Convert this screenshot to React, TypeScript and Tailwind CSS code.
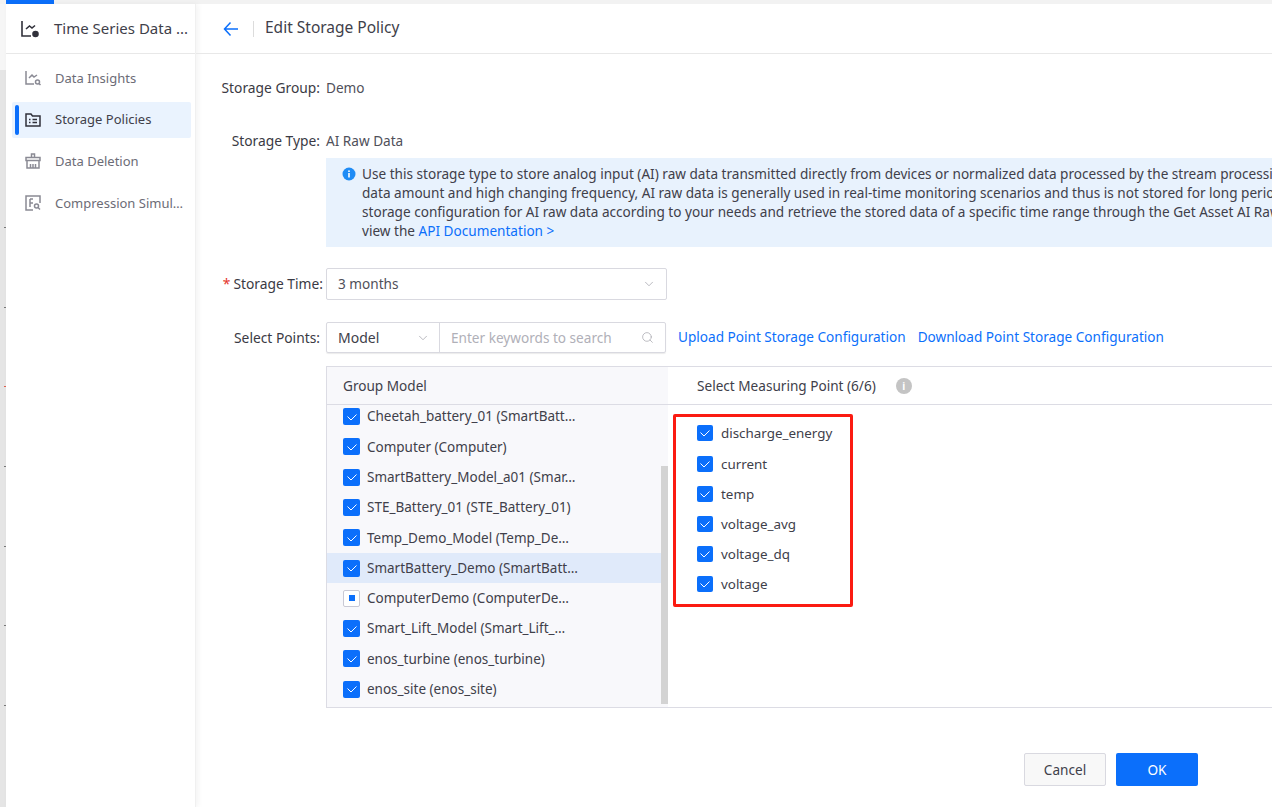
import { ChevronDown, Search } from "lucide-react";

const NAV_ITEMS = [
  { label: "Data Insights", icon: "insights" },
  { label: "Storage Policies", icon: "policies", active: true },
  { label: "Data Deletion", icon: "deletion" },
  { label: "Compression Simul…", icon: "compression" },
];

const MODELS = [
  { label: "Cheetah_battery_01 (SmartBatt…" },
  { label: "Computer (Computer)" },
  { label: "SmartBattery_Model_a01 (Smar…" },
  { label: "STE_Battery_01 (STE_Battery_01)" },
  { label: "Temp_Demo_Model (Temp_De…" },
  { label: "SmartBattery_Demo (SmartBatt…", selected: true },
  { label: "ComputerDemo (ComputerDe…", partial: true },
  { label: "Smart_Lift_Model (Smart_Lift_…" },
  { label: "enos_turbine (enos_turbine)" },
  { label: "enos_site (enos_site)" },
];

const POINTS = ["discharge_energy", "current", "temp", "voltage_avg", "voltage_dq", "voltage"];

const TICKS = ["#777777", "#777777", "#e0604f", "#777777", "#777777", "#777777", "#777777"];

function NavIcon({ name, color }: { name: string; color: string }) {
  return (
    <svg width="18" height="18" viewBox="0 0 18 18" fill="none" stroke={color} strokeWidth="1.5">
      {name === "insights" && (
        <>
          <path d="M2 2v13h8" />
          <path d="M5 9l3-3 2 2 3-2" />
          <circle cx="13.5" cy="13" r="2" />
          <path d="M15 14.5l1.5 1.5" />
        </>
      )}
      {name === "policies" && (
        <>
          <path d="M2 15V3h5l1.5 2H16v10z" />
          <path d="M5 8.5h1.5M8.5 8.5H13M5 11.5h1.5M8.5 11.5H13" />
        </>
      )}
      {name === "deletion" && (
        <>
          <path d="M7.5 5V2h3v3" />
          <path d="M2 5.5h14v3H2z" />
          <path d="M3 8.5V16h12V8.5" />
          <path d="M6.5 12v4M9 12v4M11.5 12v4" />
        </>
      )}
      {name === "compression" && (
        <>
          <path d="M16 9V2H2v14h7" />
          <path d="M6 5h3M6 5v8M6 9h3" />
          <circle cx="12.5" cy="12" r="2" />
          <path d="M14 13.5l2 2" />
        </>
      )}
    </svg>
  );
}

function Checkbox({ partial, large }: { partial?: boolean; large?: boolean }) {
  const size = large ? "h-[17px] w-[17px]" : "h-4 w-4";
  if (partial) {
    return (
      <span className={`flex shrink-0 items-center justify-center rounded-[2px] border border-[#c9c9d4] bg-white ${size}`}>
        <span className="h-1.5 w-1.5 bg-[#0b6ffb]" />
      </span>
    );
  }
  return (
    <span className={`flex shrink-0 items-center justify-center rounded-[2px] bg-[#0b6ffb] ${size}`}>
      <svg width="12" height="12" viewBox="0 0 12 12" fill="none" stroke="#ffffff" strokeWidth="1">
        <path d="M1.5 5.5L5 9l5.5-5.5" />
      </svg>
    </span>
  );
}

function FormLabel({ children, required }: { children: string; required?: boolean }) {
  return (
    <div className={`flex w-[130px] shrink-0 justify-end text-[13.8px] text-[#3a3a44] ${required ? "pr-[3px]" : "pr-[6px]"}`}>
      {required && <span className="mr-[3px] text-[#e5352b]">*</span>}
      <span>{children}:</span>
    </div>
  );
}

export default function App() {
  return (
    <div
      className="flex h-[807px] w-[1272px] flex-col overflow-hidden bg-white text-[13.6px] text-[#40404a]"
      style={{ fontFamily: '"Noto Sans", "Open Sans", sans-serif' }}
    >
      <div className="flex h-1 shrink-0 bg-[#f2f2f2]">
        <div className="ml-[6px] w-12 bg-[#0b6ffb]" />
      </div>

      <div className="flex min-h-0 flex-1">
        {/* strip of the page behind the panel */}
        <div className="flex w-[6px] shrink-0 flex-col bg-[#e5e5e5]">
          <div className="h-[66px] shrink-0 bg-[#f6f6f6]" />
          <div className="mt-[157px] flex flex-col gap-[78.7px]">
            {TICKS.map((color, i) => (
              <div key={i} className="ml-[4px] h-px w-[2px]" style={{ backgroundColor: color }} />
            ))}
          </div>
        </div>

        <aside className="flex w-[190px] shrink-0 flex-col border-r border-[#f0f0f0] bg-white shadow-[2px_0_6px_rgba(0,0,0,0.05)]">
          <div className="flex h-[50px] shrink-0 items-center border-b border-[#e8e8e8] pl-[14px] text-[#40404a]">
            <svg width="20" height="20" viewBox="0 0 20 20" fill="none" stroke="#30303a" strokeWidth="1.6">
              <path d="M2 2v15h9" />
              <path d="M6 10l3.5-3 2.5 2 3-2.5" />
              <circle cx="15.5" cy="15" r="2.5" fill="#30303a" />
            </svg>
            <span className="ml-[14px] text-[15px]">Time Series Data ...</span>
          </div>
          <nav className="flex flex-col gap-[5.6px] pt-[6px] pr-[4px] pl-[6px]">
            {NAV_ITEMS.map((item) => (
              <div
                key={item.label}
                className={`relative flex h-9 items-center rounded-[2px] pl-[12px] text-[13px] ${
                  item.active ? "bg-[#eaf3fe] text-[#40404a]" : "text-[#6c6c76]"
                }`}
              >
                {item.active && (
                  <span className="absolute top-[3px] left-[3px] h-[30px] w-[4px] rounded-[2px] bg-[#0b6ffb]" />
                )}
                <NavIcon name={item.icon} color={item.active ? "#30303a" : "#8a8a94"} />
                <span className="mt-[1px] ml-[13px] whitespace-nowrap">{item.label}</span>
              </div>
            ))}
          </nav>
        </aside>

        <main className="flex min-w-0 flex-1 flex-col">
          <header className="flex h-[50px] shrink-0 items-center border-b border-[#e8e8e8] pl-[27px]">
            <svg width="16" height="16" viewBox="0 0 16 16" fill="none" stroke="#0b6ffb" strokeWidth="1.5">
              <path d="M15 8H1.5M7.5 1.5L1.5 8l6 6.5" />
            </svg>
            <span className="mr-[11px] ml-[14px] h-[16px] w-px bg-[#dcdcdc]" />
            <span className="-mt-[1px] text-[15.5px] text-[#40404a]">Edit Storage Policy</span>
          </header>

          <div className="flex items-center pt-[24px]">
            <FormLabel>Storage Group</FormLabel>
            <span className="text-[#50505a]">Demo</span>
          </div>

          <div className="mt-[32px] flex items-center">
            <FormLabel>Storage Type</FormLabel>
            <span className="text-[#50505a]">AI Raw Data</span>
          </div>

          <div className="mt-[7px] ml-[130px] flex h-[89px] w-[1100px] items-start gap-[6px] bg-[#e8f2fd] pt-[6px] pl-[16px] leading-[19px] text-[#40404a]">
            <svg className="mt-[3px] shrink-0" width="14" height="14" viewBox="0 0 14 14">
              <circle cx="7" cy="7" r="6.5" fill="#1f8cf5" />
              <rect x="6.2" y="6" width="1.6" height="4.5" fill="#ffffff" />
              <rect x="6.2" y="3.4" width="1.6" height="1.6" fill="#ffffff" />
            </svg>
            <div className="whitespace-nowrap">
              <div>Use this storage type to store analog input (AI) raw data transmitted directly from devices or normalized data processed by the stream processing</div>
              <div>data amount and high changing frequency, AI raw data is generally used in real-time monitoring scenarios and thus is not stored for long periods</div>
              <div>storage configuration for AI raw data according to your needs and retrieve the stored data of a specific time range through the Get Asset AI Raw</div>
              <div>
                view the <span className="text-[#0b6ffb]">API Documentation &gt;</span>
              </div>
            </div>
          </div>

          <div className="mt-[21px] flex items-center">
            <FormLabel required>Storage Time</FormLabel>
            <div className="flex h-8 w-[341px] items-center justify-between rounded-[2px] border border-[#d9d9e0] pr-[10px] pl-[11px] text-[#50505a]">
              <span>3 months</span>
              <ChevronDown size={14} strokeWidth={1.25} color="#a0a0a8" />
            </div>
          </div>

          <div className="mt-[22px] flex items-center">
            <FormLabel>Select Points</FormLabel>
            <div className="flex h-[31px] w-[340px] items-center rounded-[2px] border border-[#d9d9e0] shadow-[0_1px_1px_rgba(0,0,0,0.08)]">
              <div className="flex h-full w-[113px] shrink-0 items-center justify-between border-r border-[#d9d9e0] pr-[9px] pl-[11px] text-[14px]">
                <span>Model</span>
                <ChevronDown size={14} strokeWidth={1.25} color="#a0a0a8" />
              </div>
              <div className="flex flex-1 items-center justify-between pr-[11px] pl-[11px] text-[#b0b0b8]">
                <span>Enter keywords to search</span>
                <Search size={13} strokeWidth={1.25} color="#a0a0a8" />
              </div>
            </div>
            <div className="mb-[1px] ml-[12px] flex gap-[12px] text-[#0b6ffb]">
              <span>Upload Point Storage Configuration</span>
              <span>Download Point Storage Configuration</span>
            </div>
          </div>

          <div className="mt-[13px] ml-[130px] flex h-[342px] w-[960px] border border-[#dcdce4]">
            <div className="flex w-[341px] shrink-0 flex-col bg-[#f8f8fb]">
              <div className="flex h-[38px] shrink-0 items-center border-b border-[#dcdce4] pl-[16px]">
                Group Model
              </div>
              <div className="relative min-h-0 flex-1 overflow-hidden pr-[7px]">
                <div className="absolute top-[61px] right-0 bottom-[3px] w-[7px] bg-[#d3d3d3]" />
                <div className="-mt-[4px] flex flex-col">
                  {MODELS.map((model) => (
                    <div
                      key={model.label}
                      className={`flex h-[30.3px] items-center gap-[7px] pl-[16px] text-[13.5px] whitespace-nowrap ${
                        model.selected ? "bg-[#e0eafa]" : ""
                      }`}
                    >
                      <Checkbox partial={model.partial} large />
                      <span>{model.label}</span>
                    </div>
                  ))}
                </div>
              </div>
            </div>

            <div className="flex flex-1 flex-col">
              <div className="flex h-[38px] shrink-0 items-center border-b border-[#dcdce4] pl-[29px]">
                <span>Select Measuring Point (6/6)</span>
                <span className="ml-[20px] flex h-4 w-4 items-center justify-center rounded-full bg-[#c4c4c4] text-[10px] leading-none font-bold text-white">
                  i
                </span>
              </div>
              <div className="mt-[9px] ml-[5px] flex h-[193px] w-[180px] flex-col rounded-[2px] border-[3px] border-[#fb1b11] pt-[1px] pl-[21px]">
                {POINTS.map((point) => (
                  <div key={point} className="flex h-[30.2px] items-center gap-[8px] text-[13.4px]">
                    <Checkbox />
                    <span>{point}</span>
                  </div>
                ))}
              </div>
            </div>
          </div>

          <div className="mt-[45px] flex gap-[10px] pl-[828px]">
            <button className="h-[33px] w-[82px] rounded-[2px] border border-[#d9d9e0] bg-[#f8f8f8] text-[#40404a]">
              Cancel
            </button>
            <button className="h-[33px] w-[82px] rounded-[2px] bg-[#0b6ffb] text-white">OK</button>
          </div>
        </main>
      </div>
    </div>
  );
}
